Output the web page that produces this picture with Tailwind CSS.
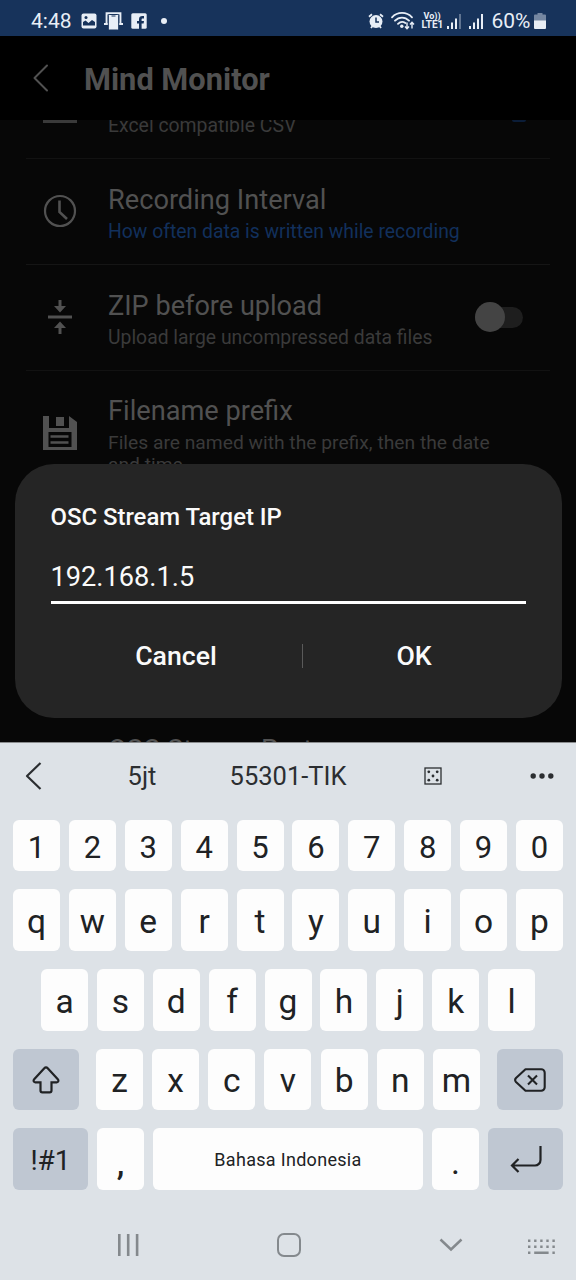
<!DOCTYPE html>
<html lang="id">
<head>
<meta charset="utf-8">
<title>Mind Monitor</title>
<script src="https://cdn.jsdelivr.net/npm/@tailwindcss/browser@4"></script>
</head>
<body class="bg-black">
<div class="relative flex h-[1280px] w-[576px] flex-col overflow-hidden bg-[#070707] font-['Roboto',sans-serif]">

  <!-- Status bar -->
  <header class="flex h-9 shrink-0 items-center bg-[#17335b] pt-[5px] pl-[31px] text-[#e8eef6]">
    <span class="w-[50px] text-[21px] leading-8">4:48</span>
    <svg class="size-4" viewBox="0 0 16 16"><rect x=".5" y=".5" width="15" height="15" rx="2" fill="currentColor"/><path d="M2 12.500V9l2.500-1.500 3 2.500 3.500-3 3 2v3.500z" fill="#17335b"/><circle cx="5" cy="4.500" r="1.500" fill="#17335b"/></svg>
    <svg class="ml-[7px] h-[18px] w-[19px]" viewBox="0 0 19 18"><path d="M2.600 12V1.200h13.800V12M0 12h4.500M14.500 12H19" fill="none" stroke="currentColor" stroke-width="2"/><rect x="4.300" y="2.500" width="10.400" height="15.500" rx="1" fill="currentColor" stroke="#17335b" stroke-width="1"/><path d="M7.500 4h4" stroke="#17335b"/></svg>
    <svg class="ml-[7.500px] size-4" viewBox="0 0 16 16"><rect x=".3" y=".3" width="15.400" height="15.400" rx="1.500" fill="currentColor"/><path d="M8 16v-5.500H6V8h2V6.300C8 4 9.300 3 11.300 3H13v2.400h-1.300c-.8 0-1.100.3-1.100 1.100V8H13l-.4 2.500h-2V16z" fill="#17335b"/></svg>
    <span class="ml-[14px] size-[6px] rounded-full bg-current"></span>
    <svg class="ml-[201px] h-4 w-4" viewBox="0 0 16 16"><circle cx="8" cy="8.500" r="6.500" fill="currentColor"/><path d="M1 3.800 4 1.200M15 3.800 12 1.200M3 15l1.500-2M13 15l-1.500-2" stroke="currentColor" stroke-width="1.800"/><path d="M8 4.500V9h3" fill="none" stroke="#17335b" stroke-width="1.500"/></svg>
    <svg class="ml-[7px] h-[19px] w-6" viewBox="0 0 24 19"><g fill="none" stroke="currentColor" stroke-width="1.800" stroke-linecap="round"><path d="M1 6.300c5.500-5.800 14.500-5.800 20 0M4 9.700c4-4.100 10-4.100 14 0M7 12.900c2.400-2.400 5-2.500 7.400-.8"/></g><circle cx="10.800" cy="15.200" r="1.700" fill="currentColor"/><path d="M16 11.500v6m-2-2 2 2.200 2-2.200M21 17.500v-6m-2 2 2-2.200 2 2.200" fill="none" stroke="currentColor" stroke-width="1.400"/></svg>
    <div class="ml-[7px] w-[23px] text-[9px] leading-[8.500px] font-bold"><div class="pl-[2px]">Vo))</div><div class="text-[10px] leading-[9px]">LTE1</div></div>
    <svg class="ml-[2px] h-4 w-9" viewBox="0 0 36 16" fill="currentColor"><path d="M0 13h2v3H0zM4 9.500h2V16H4zM8 5.500h2V16H8z"/><path d="M12 1h2v15h-2z" opacity=".35"/><path d="M22 13h2v3h-2zM26 9.500h2V16h-2zM30 5.500h2V16h-2zM34 1h2v15h-2z"/></svg>
    <span class="ml-[9px] w-[42px] text-[21px] leading-8">60%</span>
    <svg class="h-4 w-3" viewBox="0 0 12 16" fill="currentColor"><path d="M3.500 0h5v1.500H11a1 1 0 0 1 1 1V8H0V2.500a1 1 0 0 1 1-1h2.500z" opacity=".45"/><path d="M0 7.500h12V15a1 1 0 0 1-1 1H1a1 1 0 0 1-1-1z"/></svg>
  </header>

  <!-- App bar -->
  <div class="flex h-[84px] shrink-0 items-center bg-black pl-[33px] text-[#515151]">
    <svg class="h-[28px] w-[16px]" viewBox="0 0 16 28"><path d="M14 1.500 1.500 14 14 26.500" fill="none" stroke="currentColor" stroke-width="2" stroke-linecap="round" stroke-linejoin="round"/></svg>
    <h1 class="ml-[35px] pt-[3px] text-[30.800px] leading-9 font-bold">Mind Monitor</h1>
  </div>

  <!-- Settings list -->
  <main class="flex h-[622px] shrink-0 flex-col overflow-hidden px-[26px] text-[#3a3a3a]">
    <section class="flex h-[39px] shrink-0 items-start border-b border-[#121212] pl-[17px]">
      <div class="h-[3px] w-[34px] bg-[#3a3a3a]"></div>
      <p class="-mt-[5px] ml-[31px] text-[19.400px] leading-[22px]">Excel compatible CSV</p>
      <div class="mr-6 ml-auto h-[2px] w-[14px] rounded-b-full bg-[#0b1d38]"></div>
    </section>
    <section class="flex h-[106px] shrink-0 items-center border-b border-[#151515] pl-[17px]">
      <svg class="-mt-px size-[34px] text-[#515151]" viewBox="0 0 34 34" fill="none" stroke="currentColor" stroke-width="2.200"><circle cx="17" cy="17" r="15"/><path d="M16.500 6.500V18l7.500 7" stroke-width="2.600"/></svg>
      <div class="mt-[4px] ml-[31px]">
        <h2 class="text-[27.200px] leading-8 text-[#515151]">Recording Interval</h2>
        <p class="mt-[5px] text-[19.350px] leading-[22px] text-[#12305c]">How often data is written while recording</p>
      </div>
    </section>
    <section class="flex h-[106px] shrink-0 items-center border-b border-[#121212] pl-[17px]">
      <svg class="-mt-px size-[34px] text-[#515151]" viewBox="0 0 34 34"><path d="M5 15.500h24v3H5z" fill="currentColor"/><path d="M15.500 0h3v6h4.500l-6 6.500L11 6h4.500zM15.500 34h3v-6h4.500l-6-6.500L11 28h4.500z" fill="currentColor"/></svg>
      <div class="mt-[4px] ml-[31px]">
        <h2 class="text-[27.100px] leading-8 text-[#515151]">ZIP before upload</h2>
        <p class="mt-[5px] text-[19.350px] leading-[22px]">Upload large uncompressed data files</p>
      </div>
      <div class="-mt-px mr-[27px] ml-auto flex h-[21px] w-[48px] items-center rounded-full bg-[#1e1e1e]"><span class="size-[30px] shrink-0 rounded-full bg-[#444444]"></span></div>
    </section>
    <section class="flex h-[306px] shrink-0 items-start pt-[24px] pl-[17px]">
      <svg class="mt-[21px] size-[34px] text-[#515151]" viewBox="0 0 34 34"><path d="M0 0h6v12h20V0l8 6v28H0z" fill="currentColor"/><path d="M6 0h17v11H6z" fill="#070707"/><path d="M13 1h8v9h-8z" fill="currentColor"/><path d="M5.500 16h23v15h-23z" fill="#070707"/><path d="M7.500 20.500h18M7.500 26.500h18" stroke="currentColor" stroke-width="2.400"/></svg>
      <div class="ml-[31px]">
        <h2 class="text-[27.200px] leading-8 text-[#515151]">Filename prefix</h2>
        <p class="mt-[5px] w-[400px] text-[19.250px] leading-[22px]">Files are named with the prefix, then the date and time</p>
      </div>
    </section>
    <section class="flex shrink-0 pt-[57px] pl-[82px]"><h2 class="text-[27.200px] leading-8 text-[#515151]">OSC Stream Port</h2></section>
  </main>

  <!-- Dialog -->
  <div class="absolute top-[464px] left-[14.500px] flex h-[254px] w-[547px] flex-col rounded-[39px] bg-[#252525] px-9 pt-[37px] text-[#fafafa]">
    <h2 class="text-[23.900px] leading-8 font-medium">OSC Stream Target IP</h2>
    <div class="mt-[24px] flex h-[47px] items-start border-b-[3px] border-white text-[27.200px] leading-[40px]">192.168.1.5</div>
    <div class="mt-8 flex h-[40px] items-center text-[26.700px] font-medium">
      <button class="w-[251px]">Cancel</button>
      <span class="h-6 w-px bg-[#5a5a5a]"></span>
      <button class="w-[223px]">OK</button>
    </div>
  </div>

  <!-- Keyboard -->
  <div class="flex h-[538px] shrink-0 flex-col border-t border-[#8a8c8e] bg-[#dde2e7] text-[#202224]">
    <div class="flex h-[66px] shrink-0 items-center pl-[25px] text-[25.500px] text-[#2b2e31]">
      <svg class="h-[30px] w-[18px]" viewBox="0 0 18 30"><path d="M15.500 2 2 15l13.500 13" fill="none" stroke="currentColor" stroke-width="2.200" stroke-linejoin="round"/></svg>
      <span class="ml-[69px] w-[60px] text-center">5jt</span>
      <span class="ml-[46px] w-[140px] text-center">55301-TIK</span>
      <svg class="ml-[66px] size-[18px]" viewBox="0 0 18 18" fill="currentColor"><rect x="1" y="1" width="16" height="16" fill="none" stroke="currentColor" stroke-width="1.300"/><circle cx="4.800" cy="4.800" r="1.400"/><circle cx="13.200" cy="4.800" r="1.400"/><circle cx="9" cy="9" r="1.400"/><circle cx="4.800" cy="13.200" r="1.400"/><circle cx="13.200" cy="13.200" r="1.400"/></svg>
      <svg class="ml-[88px] h-6 w-6" viewBox="0 0 24 24" fill="currentColor"><circle cx="3.200" cy="12" r="2.700"/><circle cx="12" cy="12" r="2.700"/><circle cx="20.800" cy="12" r="2.700"/></svg>
    </div>

    <div class="mt-[11px] flex h-[51px] shrink-0 justify-between px-[13px] text-[31px] [&>*]:flex [&>*]:w-[47px] [&>*]:items-center [&>*]:justify-center [&>*]:rounded-md [&>*]:bg-[#fdfdfd] [&>*]:pt-[5px]">
      <button>1</button><button>2</button><button>3</button><button>4</button><button>5</button><button>6</button><button>7</button><button>8</button><button>9</button><button>0</button>
    </div>
    <div class="mt-[18px] flex h-[62px] shrink-0 justify-between px-[13px] text-[33.500px] [&>*]:flex [&>*]:w-[47px] [&>*]:items-center [&>*]:justify-center [&>*]:rounded-md [&>*]:bg-[#fdfdfd] [&>*]:pt-[4px]">
      <button>q</button><button>w</button><button>e</button><button>r</button><button>t</button><button>y</button><button>u</button><button>i</button><button>o</button><button>p</button>
    </div>
    <div class="mt-[18px] flex h-[62px] shrink-0 justify-between px-[41px] text-[33.500px] [&>*]:flex [&>*]:w-[47px] [&>*]:items-center [&>*]:justify-center [&>*]:rounded-md [&>*]:bg-[#fdfdfd] [&>*]:pt-[4px]">
      <button>a</button><button>s</button><button>d</button><button>f</button><button>g</button><button>h</button><button>j</button><button>k</button><button>l</button>
    </div>
    <div class="mt-[18px] flex h-[61px] shrink-0 justify-between px-[13px]">
      <button class="flex w-[66px] items-center justify-center rounded-md bg-[#bfc7d2]">
        <svg class="size-[30px]" viewBox="0 0 30 30"><path d="M13.300 3.200 3.200 14.200c-1.200 1.400-.6 3.100 1 3.100h5.300v8.200c0 1.200.6 1.800 1.800 1.800h7.400c1.200 0 1.800-.6 1.800-1.800v-8.200h5.300c1.600 0 2.200-1.700 1-3.100L16.700 3.200c-1-1.100-2.400-1.100-3.400 0z" fill="none" stroke="currentColor" stroke-width="2.200"/></svg>
      </button>
      <div class="flex w-[384px] justify-between text-[33.500px] [&>*]:flex [&>*]:w-[47px] [&>*]:items-center [&>*]:justify-center [&>*]:rounded-md [&>*]:bg-[#fdfdfd] [&>*]:pt-[4px]">
        <button>z</button><button>x</button><button>c</button><button>v</button><button>b</button><button>n</button><button>m</button>
      </div>
      <button class="flex w-[66px] items-center justify-center rounded-md bg-[#bfc7d2]">
        <svg class="h-6 w-8" viewBox="0 0 32 24"><g fill="none" stroke="currentColor" stroke-width="2.100"><path d="M11.500 1.200h15.700a3.500 3.500 0 0 1 3.500 3.500v14.600a3.500 3.500 0 0 1-3.500 3.500H11.500L2 14c-1.100-1.200-1.100-2.700 0-4z" stroke-linejoin="round"/><path d="m14 7.500 9 9m0-9-9 9"/></g></svg>
      </button>
    </div>
    <div class="mt-[18px] flex h-[62px] shrink-0 justify-between px-[13px]">
      <button class="w-[75px] rounded-md bg-[#bfc7d2] pt-[3px] text-[28px]">!#1</button>
      <button class="w-[47px] rounded-md bg-[#fdfdfd] pt-[9px] text-[34px] font-medium">,</button>
      <button class="w-[270px] rounded-md bg-[#fdfdfd] pt-px text-[18px] tracking-[0.300px]">Bahasa Indonesia</button>
      <button class="w-[47px] rounded-md bg-[#fdfdfd] pt-[6px] text-[34px]">.</button>
      <button class="flex w-[75px] items-center justify-center rounded-md bg-[#bfc7d2]">
        <svg class="h-8 w-8" viewBox="0 0 32 32"><path d="M30.500 3v14a5.500 5.500 0 0 1-5.500 5.500H2M8.500 16 2 22.500 8.500 29" fill="none" stroke="currentColor" stroke-width="2.200"/></svg>
      </button>
    </div>

    <!-- Navigation bar -->
    <nav class="mt-[42px] flex h-[26px] shrink-0 items-center pl-[117px] text-[#84898d]">
      <svg class="h-[22px] w-[22px]" viewBox="0 0 22 22" fill="currentColor"><path d="M1 0h2.600v22H1zM9.900 0h2.600v22H9.900zM18.800 0h2.600v22h-2.600z"/></svg>
      <span class="ml-[138px] size-[24px] rounded-[7px] border-[2.500px] border-current"></span>
      <svg class="ml-[138px] h-[14px] w-6" viewBox="0 0 24 14"><path d="m1.500 1.500 10.500 10 10.500-10" fill="none" stroke="currentColor" stroke-width="2.500"/></svg>
      <svg class="mt-[3px] ml-[65px] h-4 w-7" viewBox="0 0 28 16" fill="none" stroke="currentColor" stroke-width="2.400"><path d="M0 1.700h28M0 7.700h28" stroke-dasharray="2.400 3.700"/><path d="M0 13.700h2.400M6.200 13.700h14.400M24.400 13.700h2.400"/></svg>
    </nav>
  </div>
</div>
</body>
</html>
